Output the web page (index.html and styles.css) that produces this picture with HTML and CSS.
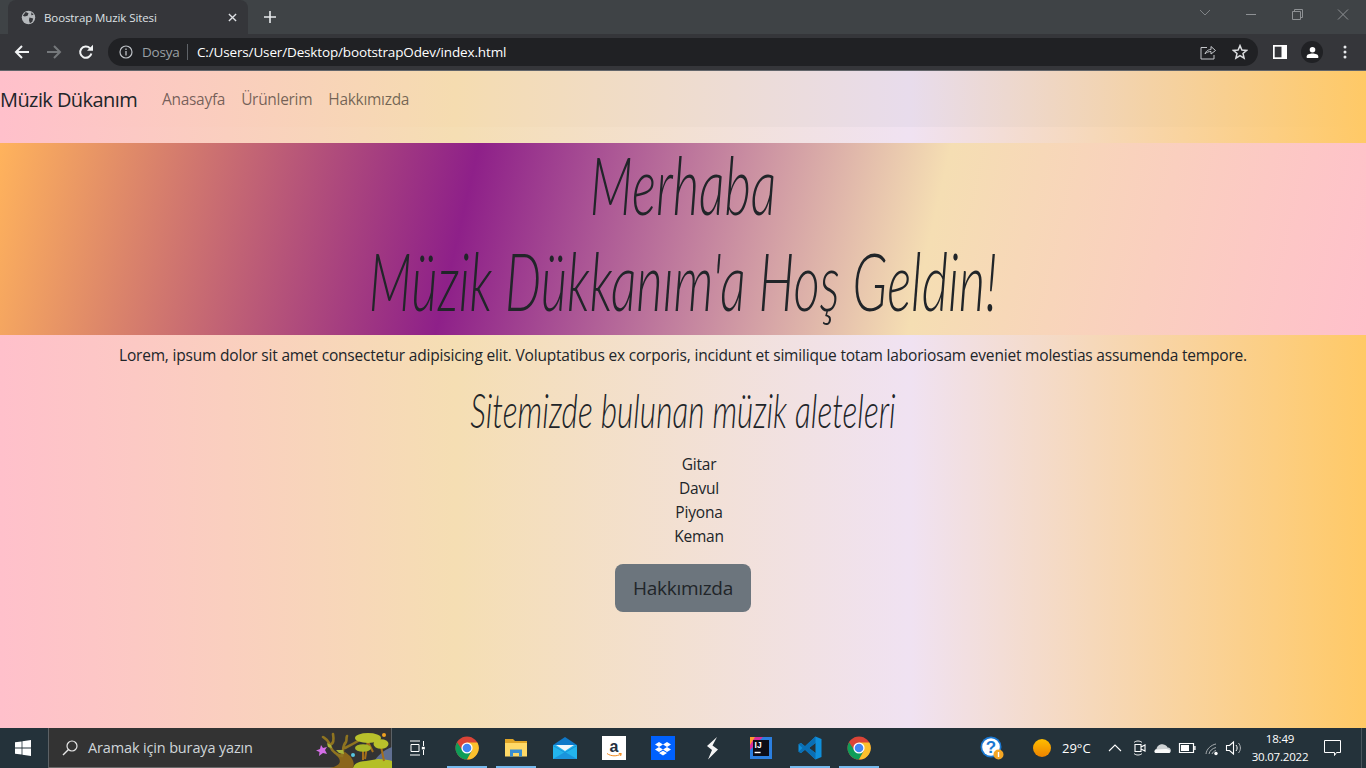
FILE: index.html
```html
<!DOCTYPE html>
<html lang="tr">
<head>
<meta charset="utf-8">
<title>Boostrap Muzik Sitesi</title>
<link rel="stylesheet" href="styles.css">
</head>
<body>
<svg class="defs" width="0" height="0" aria-hidden="true">
  <symbol id="chrome" viewBox="0 0 24 24">
    <circle cx="12" cy="12" r="11.5" fill="#db4437"/>
    <path d="M2.05 6.25 A11.5 11.5 0 0 0 2.05 17.75 A11.5 11.5 0 0 0 12 23.5 L17 14.5 L12 17 L7.5 14.5 Z" fill="#0f9d58"/>
    <path d="M12 6.5 H22.4 A11.5 11.5 0 0 1 12 23.5 L17 14.5 Z" fill="#fbc02d"/>
    <circle cx="12" cy="12" r="5.6" fill="#fff"/>
    <circle cx="12" cy="12" r="4.3" fill="#4285f4"/>
  </symbol>
</svg>

<div class="browser">
  <div class="tabstrip">
    <div class="tab">
      <svg class="favicon" viewBox="0 0 16 16"><circle cx="8" cy="8" r="7.2" fill="#b5b8bb"/><path d="M5 2 L8 3.5 L7 6 L4 7 L2 6 Z M9 8 L13 9 L12 12.5 L9.5 14 L8.5 11 Z M11 2.5 L13.5 5 L11 5.5 Z" fill="#35363a"/></svg>
      <span class="tab-title">Boostrap Muzik Sitesi</span>
      <svg class="tab-close" viewBox="0 0 10 10"><path d="M1 1 L9 9 M9 1 L1 9" stroke="#dfe1e5" stroke-width="1.5"/></svg>
    </div>
    <svg class="new-tab" viewBox="0 0 12 12"><path d="M6 0 V12 M0 6 H12" stroke="#e8eaed" stroke-width="1.6"/></svg>
    <div class="window-controls">
      <svg class="wc" viewBox="0 0 46 20"><path d="M18 6 L23 11 L28 6" fill="none" stroke="#7f8386" stroke-width="1"/></svg>
      <svg class="wc" viewBox="0 0 46 20"><path d="M18 10.5 H28" stroke="#8e9194" stroke-width="1"/></svg>
      <svg class="wc" viewBox="0 0 46 20"><path d="M18.5 7.5 H26.5 V15.5 H18.5 Z M20.5 7.5 V5.5 H28.5 V13.5 H26.5" fill="none" stroke="#8e9194" stroke-width="1"/></svg>
      <svg class="wc" viewBox="0 0 46 20"><path d="M18 5.5 L28 15.5 M28 5.5 L18 15.5" stroke="#8e9194" stroke-width="1"/></svg>
    </div>
  </div>
  <div class="toolbar">
    <svg class="nav-icon" viewBox="0 0 16 16"><path d="M15 8 H2 M8 2 L2 8 L8 14" fill="none" stroke="#f1f3f4" stroke-width="2"/></svg>
    <svg class="nav-icon" viewBox="0 0 16 16"><path d="M1 8 H14 M8 2 L14 8 L8 14" fill="none" stroke="#75787b" stroke-width="2"/></svg>
    <svg class="nav-icon" viewBox="0 0 16 16"><path d="M13.4 9.5 A5.7 5.7 0 1 1 12 4.2" fill="none" stroke="#f1f3f4" stroke-width="2"/><path d="M9 6.8 H15 V0.8 Z" fill="#f1f3f4"/></svg>
    <div class="omnibox">
      <svg class="info" viewBox="0 0 14 14"><circle cx="7" cy="7" r="6" fill="none" stroke="#bdc1c6" stroke-width="1.2"/><path d="M7 6 V10.5 M7 3.4 V4.9" stroke="#bdc1c6" stroke-width="1.3"/></svg>
      <span class="dosya">Dosya</span>
      <span class="url">C:/Users/User/Desktop/bootstrapOdev/index.html</span>
      <svg class="omni-icon share" viewBox="0 0 16 16"><path d="M7 3.5 H1 V15 H14 V11 M5 10 C6 6.5 9 5.5 11 5.5 V2.5 L15.5 6.5 L11 10 V7.5 C9 7.5 6.5 8 5 10 Z" fill="none" stroke="#c4c7ca" stroke-width="1"/></svg>
      <svg class="omni-icon star" viewBox="0 0 16 16"><path d="M8 1.6 L9.9 6 L14.6 6.4 L11 9.5 L12.1 14.2 L8 11.7 L3.9 14.2 L5 9.5 L1.4 6.4 L6.1 6 Z" fill="none" stroke="#dcdee0" stroke-width="1.5"/></svg>
    </div>
    <svg class="side-panel" viewBox="0 0 14 14"><path d="M0 0 H14 V14 H0 Z" fill="#fff"/><path d="M1.7 1.7 H8.5 V12.3 H1.7 Z" fill="#35363a"/></svg>
    <div class="profile"><svg viewBox="0 0 14 14" class="profile-glyph"><circle cx="7" cy="4" r="3" fill="#fff"/><path d="M0.8 13 V11 C0.8 9 4 8 7 8 C10 8 13.2 9 13.2 11 V13 Z" fill="#fff"/></svg></div>
    <svg class="dots" viewBox="0 0 4 14"><circle cx="2" cy="2" r="1.5" fill="#e8eaed"/><circle cx="2" cy="7" r="1.5" fill="#e8eaed"/><circle cx="2" cy="12" r="1.5" fill="#e8eaed"/></svg>
  </div>
</div>

<div class="page">
  <nav class="navbar">
    <a class="brand">Müzik Dükanım</a>
    <a class="nav-link">Anasayfa</a>
    <a class="nav-link">Ürünlerim</a>
    <a class="nav-link">Hakkımızda</a>
  </nav>
  <h1 class="hero">
    <span class="hand-line">Merhaba</span>
    <span class="hand-line">Müzik Dükkanım'a Hoş Geldin!</span>
  </h1>
  <p class="lead">Lorem, ipsum dolor sit amet consectetur adipisicing elit. Voluptatibus ex corporis, incidunt et similique totam laboriosam eveniet molestias assumenda tempore.</p>
  <h2 class="sub"><span class="hand-line">Sitemizde bulunan müzik aleteleri</span></h2>
  <ul class="instruments">
    <li>Gitar</li>
    <li>Davul</li>
    <li>Piyona</li>
    <li>Keman</li>
  </ul>
  <a class="btn">Hakkımızda</a>
</div>

<div class="taskbar">
  <div class="start">
    <svg class="win" viewBox="0 0 16 16"><path d="M0 2.3 L6.6 1.4 V7.5 H0 Z M7.4 1.3 L16 0 V7.5 H7.4 Z M0 8.4 H6.6 V14.6 L0 13.7 Z M7.4 8.4 H16 V16 L7.4 14.7 Z" fill="#fff"/></svg>
  </div>
  <div class="search">
    <svg class="magnifier" viewBox="0 0 16 16"><circle cx="10" cy="6" r="5" fill="none" stroke="#e6e6e6" stroke-width="1.2"/><path d="M6.5 9.5 L1 15" stroke="#e6e6e6" stroke-width="1.4"/></svg>
    <span class="search-text">Aramak için buraya yazın</span>
    <svg class="doodle" viewBox="0 0 76 40">
      <path d="M57 36 C60 28 68 22 76 19 V36 Z" fill="#5f6f92"/>
      <path d="M37 40 C38 35 44 33 50 33 L62 31 C68 31 73 32 76 33 V40 Z" fill="#b4bf27"/>
      <g fill="none" stroke="#a56f1a" stroke-width="2">
        <path d="M52 12 L49 31"/><path d="M47 21 L47 32"/><path d="M65 18 L68 33"/><path d="M52 14 L57 24"/>
      </g>
      <path d="M14 40 C24 38 27 33 20 27 L29 24 C37 29 39 35 37 40 Z" fill="#8a661b"/>
      <g fill="none" stroke="#8f7420" stroke-width="2.6" stroke-linecap="round">
        <path d="M24 28 C16 24 14 20 13 15 C12 12 10 11 7 9"/>
        <path d="M13 17 C18 16 18 12 17 6"/>
        <path d="M26 28 C28 22 26 18 30 14 C31 12 30 10 31 8"/>
        <path d="M29 20 C33 18 37 16 42 13"/>
      </g>
      <path d="M11 15 L15 17 L16 20 L12 19 Z M20 22 L27 22 L28 26 L23 25 Z" fill="#a8b53a"/>
      <ellipse cx="52" cy="10" rx="13" ry="5" fill="#b9c12b"/>
      <ellipse cx="47" cy="20" rx="8" ry="3.8" fill="#a9b728"/>
      <ellipse cx="65" cy="16" rx="7.5" ry="4.8" fill="#b9c12b"/>
      <circle cx="68" cy="7" r="2" fill="#f0a020"/>
      <circle cx="37" cy="27" r="2" fill="#58c6e0"/>
      <path d="M5 17 L7 20 L11 19 L9 22 L11 26 L7 25 L3 28 L3.5 24 L0 22.5 L4 21 Z" fill="#d46fe6"/>
    </svg>
  </div>
  <div class="slot wide">
    <svg class="tv" viewBox="0 0 16 16"><path d="M1 1 H11 M1 15 H11 M2 4.5 H10 V11.5 H2 Z M14.5 1 V6 M14.5 10 V15" fill="none" stroke="#fff" stroke-width="1"/><rect x="12.8" y="6.8" width="3" height="2.6" fill="#fff"/></svg>
  </div>
  <div class="slot app running">
    <svg class="app-icon"><use href="#chrome"/></svg>
  </div>
  <div class="slot app running">
    <svg class="app-icon" viewBox="0 0 24 24"><path d="M1 3 H9 L11 5 H23 V20 H1 Z" fill="#e0a526"/><path d="M1 7 H23 V20.5 H1 Z" fill="#ffd967"/><path d="M6 20.5 V13.5 H18 V20.5 H15 V17 H9 V20.5 Z" fill="#3a8ed0"/></svg>
  </div>
  <div class="slot app">
    <svg class="app-icon" viewBox="0 0 24 24"><path d="M0 9 L12 1 L24 9 Z" fill="#0f78c8"/><path d="M0 9 H24 V23 H0 Z" fill="#23b4ec"/><path d="M3 9 H21 L12 15 Z" fill="#f2f6fa"/><path d="M0 9 L12 16 L24 9 V10 L12 17 L0 10 Z" fill="#1790d8"/><path d="M0 23 L12 16 L24 23 Z" fill="#1a94dc"/></svg>
  </div>
  <div class="slot app">
    <svg class="app-icon" viewBox="0 0 24 24"><rect width="24" height="24" fill="#fff"/><text x="12" y="16" text-anchor="middle" class="amz">a</text><path d="M5 17.5 C9 20.5 15 20.5 19 18 M16.8 17.5 H19.3 L18.6 20" fill="none" stroke="#f08a1d" stroke-width="1"/></svg>
  </div>
  <div class="slot app">
    <svg class="app-icon" viewBox="0 0 24 24"><rect width="24" height="24" fill="#0061fe"/><path d="M8 6 L12 8.5 L8 11 L4 8.5 Z M16 6 L20 8.5 L16 11 L12 8.5 Z M8 11 L12 13.5 L8 16 L4 13.5 Z M16 11 L20 13.5 L16 16 L12 13.5 Z M8 17 L12 14.7 L16 17 L12 19.5 Z" fill="#fff"/></svg>
  </div>
  <div class="slot app">
    <svg class="app-icon" viewBox="0 0 24 24"><path d="M17 1 L7 10 L12 14 L8 23.5 L18 13.5 L12.5 9.5 Z" fill="#f5f5f5"/></svg>
  </div>
  <div class="slot app">
    <svg class="app-icon" viewBox="0 0 24 24"><rect x="1" y="1" width="22" height="22" fill="#2b7fe0"/><path d="M1 1 H14 L1 14 Z" fill="#d92f9a"/><path d="M1 9 L6 1 H1 Z" fill="#fe9a2e"/><rect x="4" y="4" width="16" height="16" fill="#0c0c16"/><text x="5.6" y="12.2" class="ij">IJ</text><rect x="5.6" y="15.8" width="6" height="1.4" fill="#fff"/></svg>
  </div>
  <div class="slot app running">
    <svg class="app-icon" viewBox="0 0 24 24"><path d="M17.5 0.5 L23.5 3 V21 L17.5 23.5 L7 13.8 L3 17 L0.5 15.7 V8.3 L3 7 L7 10.2 Z M17.5 7 L11 12 L17.5 17 Z" fill="#0f8fdb"/><path d="M17.5 0.5 L7 10.2 L3 7 L0.5 8.3 L4.5 12 L0.5 15.7 L3 17 L7 13.8 L17.5 23.5 V17 L11 12 L17.5 7 Z" fill="#0a6fb5"/></svg>
  </div>
  <div class="slot app running">
    <svg class="app-icon"><use href="#chrome"/></svg>
  </div>
  <div class="tray">
    <div class="tray-slot help">
      <svg class="help-icon" viewBox="0 0 24 24"><circle cx="11" cy="11" r="10.5" fill="#1a78d2"/><circle cx="11" cy="11" r="8.8" fill="#fff"/><text x="11" y="17" text-anchor="middle" class="q">?</text><circle cx="18.5" cy="18.5" r="5" fill="#f5a623"/><path d="M18.5 16 V21" stroke="#fff" stroke-width="1.4"/></svg>
    </div>
    <div class="weather">
      <span class="sun"></span>
      <span class="temp">29°C</span>
    </div>
    <svg class="tray-slot chev" viewBox="0 0 24 16"><path d="M6 11 L12 5 L18 11" fill="none" stroke="#fff" stroke-width="1.1"/></svg>
    <svg class="tray-slot meet" viewBox="0 0 24 16"><path d="M8 4.5 H14 V11.5 H8 Z M14 7 L18 5 V11 L14 9 Z" fill="none" stroke="#fff" stroke-width="1.1"/><path d="M7 2.5 C9 0.5 13 0.5 15 2.5 M7 13.5 C9 15.5 13 15.5 15 13.5" fill="none" stroke="#fff" stroke-width=".9"/></svg>
    <svg class="tray-slot cloud" viewBox="0 0 24 16"><path d="M5 13 C3 13 3 9.5 5.5 9 C6 6 9 3.5 12.5 4.5 C15 5 16 6 16.5 7.5 C20 7 21 12 18.5 13 Z" fill="#cfd2d4"/><path d="M5 13 C3 13 3 10 5.5 9.5 L14 9 C15.5 9 18 9 19 10.5 L18.5 13 Z" fill="#fafafa"/></svg>
    <svg class="tray-slot batt" viewBox="0 0 24 16"><path d="M4.5 3.5 H18.5 V12.5 H4.5 Z" fill="none" stroke="#fff" stroke-width="1.2"/><rect x="6" y="5" width="8" height="6" fill="#fff"/><rect x="19.2" y="6" width="1.4" height="4" fill="#fff"/></svg>
    <svg class="tray-slot wifi" viewBox="0 0 21 16"><path d="M4 14 C4.5 9 9 5 14 4 M7 14 C7.5 11 10 8.5 14 7.5 M10 14 C10.5 12.5 12 11 14 10.5" fill="none" stroke="#a9aeb1" stroke-width="1"/><circle cx="14" cy="13.5" r="1.7" fill="#fff"/></svg>
    <svg class="tray-slot vol" viewBox="0 0 22 16"><path d="M3.5 5.5 H6.5 L10.5 2 V14 L6.5 10.5 H3.5 Z" fill="none" stroke="#fff" stroke-width="1.1"/><path d="M13 5 C14.5 7 14.5 9 13 11" fill="none" stroke="#fff" stroke-width="1"/><path d="M15.5 3 C18 6 18 10 15.5 13" fill="none" stroke="#b6babd" stroke-width="1"/></svg>
    <div class="clock"><span>18:49</span><span>30.07.2022</span></div>
    <svg class="tray-slot notif" viewBox="0 0 35 20"><path d="M9.5 2.5 H25.5 V14.5 H21.5 L19.5 17.5 V14.5 H9.5 Z" fill="none" stroke="#fff" stroke-width="1"/></svg>
    <div class="desk-gap"></div>
    <div class="show-desktop"></div>
  </div>
</div>
</body>
</html>
```

FILE: styles.css
```css
* { box-sizing: border-box; }
html, body { margin: 0; padding: 0; }
body {
  width: 1366px;
  height: 768px;
  overflow: hidden;
  display: flex;
  flex-direction: column;
  font-family: "Open Sans", "Noto Sans", sans-serif;
  color: #212529;
}
.defs { position: absolute; }

/* browser chrome */
.browser { height: 71px; flex: none; background: #35363a; border-bottom: 1px solid #62656a; }
.tabstrip { height: 34px; background: #3f4346; display: flex; align-items: flex-start; position: relative; }
.tab {
  margin-left: 8px;
  width: 240px;
  height: 34px;
  background: #35363a;
  border-radius: 8px 8px 0 0;
  display: flex;
  align-items: center;
  padding-left: 13px;
}
.favicon { width: 15px; height: 15px; flex: none; }
.tab-title { margin-left: 8px; font-size: 11.5px; letter-spacing: -0.1px; color: #dee1e5; width: 182px; white-space: nowrap; }
.tab-close { width: 9px; height: 9px; margin-left: 2px; }
.new-tab { width: 12px; height: 12px; margin: 11px 0 0 16px; }
.window-controls { margin-left: auto; display: flex; }
.wc { width: 46px; height: 20px; margin-top: 4px; }

.toolbar { height: 36px; display: flex; align-items: center; padding-left: 14px; }
.nav-icon { width: 16px; height: 16px; margin-right: 16px; flex: none; }
.omnibox {
  margin-left: -2px;
  width: 1150px;
  height: 28px;
  background: #202124;
  border-radius: 14px;
  display: flex;
  align-items: center;
  padding-left: 11px;
}
.info { width: 14px; height: 14px; flex: none; }
.dosya { margin-left: 9px; font-size: 13.5px; color: #9aa0a6; width: 46px; border-right: 1px solid #5f6368; line-height: 16px; letter-spacing: -0.2px; }
.url { margin-left: 9px; font-size: 13.5px; color: #fff; letter-spacing: -0.15px; white-space: nowrap; }
.omni-icon { width: 16px; height: 16px; flex: none; }
.share { margin-left: auto; }
.star { margin-left: 16px; margin-right: 10px; }
.side-panel { width: 14px; height: 14px; margin-left: 15px; flex: none; }
.profile { width: 22px; height: 22px; border-radius: 50%; background: #202124; margin-left: 14px; display: flex; align-items: center; justify-content: center; flex: none; }
.profile-glyph { width: 13px; height: 13px; }
.dots { width: 4px; height: 14px; margin-left: 20px; flex: none; }

/* page */
.page {
  height: 657px;
  flex: none;
  text-align: center;
  background: linear-gradient(90deg, #ffc0cb 0%, #f5deb3 33.3%, #f0e2f2 66.6%, #ffc966 100%);
}
.navbar {
  height: 56px;
  margin-bottom: 16px;
  display: flex;
  align-items: center;
  background: linear-gradient(90deg, #ffc0cb 0%, #f5dcb0 33.3%, #e8dcec 66.6%, #ffc966 100%);
  text-align: left;
}
.brand { font-size: 20px; margin-right: 16px; letter-spacing: -0.58px; color: #212529; white-space: nowrap; width: 138px; }
.nav-link { font-size: 15.5px; padding: 8px; color: rgba(0, 0, 0, .55); letter-spacing: -0.3px; white-space: nowrap; }
.hero {
  margin: 0;
  height: 192px;
  font-weight: 300;
  font-size: 80px;
  line-height: 96px;
  background: linear-gradient(103deg, #ffb35c 0%, #8e2089 34%, #f5deb3 67.5%, #ffc0cb 100%);
}
.hand-line {
  display: block;
  font-family: Lato, "Open Sans", sans-serif;
  font-style: italic;
  font-weight: 300;
  white-space: nowrap;
}
.hero .hand-line { transform: translateY(-7px) scaleX(0.638); }
.lead { margin: 8px 0 17px; height: 24px; font-size: 15.5px; line-height: 24px; letter-spacing: -0.19px; white-space: nowrap; }
.sub { margin: 0 0 20px; height: 48px; font-size: 48px; font-weight: 300; line-height: 52px; }
.sub .hand-line { transform: scaleX(0.658); }
.instruments { margin: 0 0 16px; padding: 0 0 0 32px; list-style: none; font-size: 15.5px; line-height: 24px; letter-spacing: -0.19px; }
.btn {
  display: inline-block;
  width: 136px;
  height: 48px;
  background: #6c757d;
  border-radius: 8px;
  font-size: 19px;
  line-height: 48px;
  letter-spacing: -0.3px;
}

/* taskbar */
.taskbar {
  height: 40px;
  flex: none;
  background: #24323a;
  display: flex;
  align-items: stretch;
  color: #fff;
}
.start { width: 48px; display: flex; align-items: center; justify-content: center; padding-right: 2px; }
.win { width: 16px; height: 16px; }
.search {
  width: 344px;
  background: #333;
  border: 1px solid #5c6165;
  border-top: 0;
  border-bottom-color: #6a6a6a;
  display: flex;
  align-items: center;
  padding-left: 13px;
  position: relative;
}
.magnifier { width: 16px; height: 16px; flex: none; }
.search-text { margin-left: 10px; font-size: 14.5px; color: #cfd6da; letter-spacing: -0.15px; white-space: nowrap; }
.doodle { position: absolute; right: -1px; bottom: -1px; width: 76px; height: 40px; }
.slot { display: flex; align-items: center; justify-content: center; flex: none; }
.slot.wide { width: 50px; }
.tv { width: 16px; height: 16px; }
.slot.app { width: 49px; padding-bottom: 1px; position: relative; }
.slot.running::after {
  content: "";
  position: absolute;
  left: 5px;
  right: 4px;
  bottom: 0;
  height: 2px;
  background: #76b9ed;
}
.app-icon { width: 24px; height: 24px; }
.ij { font: 700 8.5px "Liberation Sans", sans-serif; fill: #fff; }
.amz { font: 700 16px "Liberation Sans", sans-serif; fill: #232f3e; }
.tray { margin-left: auto; display: flex; align-items: center; width: 398px; }
.tray-slot { flex: none; height: 16px; }
.help { width: 48px; height: 24px; display: flex; justify-content: center; }
.help-icon { width: 24px; height: 24px; }
.q { font: 700 17px "Liberation Sans", sans-serif; fill: #1a78d2; }
.weather { width: 84px; display: flex; align-items: center; flex: none; padding-left: 17px; }
.sun { width: 18px; height: 18px; border-radius: 50%; background: linear-gradient(180deg, #ffbe00, #ee8300); flex: none; }
.temp { margin-left: 11px; font-size: 13px; white-space: nowrap; }
.chev, .meet, .cloud, .batt { width: 24px; }
.chev { margin-left: 3px; }
.wifi { width: 21px; margin-left: 3px; }
.vol { width: 22px; }
.clock { width: 70px; flex: none; display: flex; flex-direction: column; align-items: center; font-size: 11.5px; line-height: 18px; letter-spacing: -0.2px; }
.notif { width: 35px; height: 20px; }
.desk-gap { width: 11px; flex: none; }
.show-desktop { width: 5px; height: 40px; border-left: 1px solid #4a555c; flex: none; }
```
